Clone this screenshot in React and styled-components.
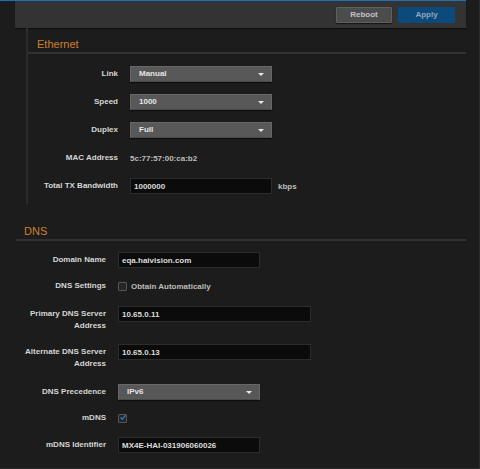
import React from "react";
import styled, { createGlobalStyle } from "styled-components";

const GlobalStyle = createGlobalStyle`
  html, body {
    margin: 0;
    padding: 0;
    background: #1c1c1c;
  }
  body {
    font-family: "Liberation Sans", Arial, sans-serif;
  }
`;

const Page = styled.div`
  display: flex;
  width: 480px;
  height: 469px;
  box-sizing: border-box;
  background: #1c1c1c;
  border-right: 1px solid #2a2a2a;
  border-bottom: 1px solid #2a2a2a;
  overflow: hidden;
`;

const Main = styled.div`
  width: 466px;
  border-top: 1px solid #1f6fb9;
  display: flex;
  flex-direction: column;
`;

const Toolbar = styled.div`
  margin-left: 15px;
  height: 27px;
  background: #333333;
  display: flex;
  justify-content: flex-end;
  align-items: center;
  gap: 6px;
  padding-right: 11px;
  box-shadow: 0 1px 1px rgba(0, 0, 0, 0.5);
`;

const Button = styled.button`
  width: ${(p) => (p.$primary ? "57px" : "56px")};
  height: 16px;
  padding: 0;
  box-sizing: border-box;
  font-family: "Liberation Sans", Arial, sans-serif;
  font-size: 8px;
  font-weight: bold;
  border-radius: 1px;
  color: ${(p) => (p.$primary ? "#8fa6bd" : "#c4c4c4")};
  background: ${(p) => (p.$primary ? "#0d4a7c" : "#4c4c4c")};
  border: 1px solid ${(p) => (p.$primary ? "#0d4a7c" : "#5f5f5f")};
  box-shadow: ${(p) => (p.$primary ? "none" : "0 1px 1px rgba(0,0,0,0.6)")};
`;

const Ethernet = styled.section`
  margin-left: 26px;
  border-left: 2px solid #2b2b2b;
  padding-bottom: 10px;
`;

const Dns = styled.section`
  margin-left: 15px;
  padding-left: 1px;
`;

const SectionTitle = styled.h2`
  margin: 0;
  font-family: "Liberation Sans", Arial, sans-serif;
  font-size: 11px;
  font-weight: normal;
  line-height: 14px;
  color: #cf7f2d;
  border-bottom: 2px solid #323232;
  padding: ${(p) => p.$pad};
`;

const Rows = styled.div`
  display: flex;
  flex-direction: column;
`;

const Row = styled.div`
  display: flex;
  align-items: ${(p) => (p.$tall ? "flex-start" : "center")};
  gap: 12px;
  min-height: ${(p) => (p.$tall ? "28px" : "16px")};
  margin-top: ${(p) => p.$mt}px;
`;

const Label = styled.div`
  width: 90px;
  flex: none;
  text-align: right;
  font-size: 8px;
  font-weight: bold;
  line-height: 11.5px;
  color: #d6d6d6;
  padding-top: ${(p) => (p.$tall ? "2px" : "0")};
`;

const Select = styled.div`
  position: relative;
  width: ${(p) => p.$w || 142}px;
  height: 16px;
  box-sizing: border-box;
  background: #585858;
  border: 1px solid #686868;
  border-bottom-color: #4a4a4a;
  padding-left: 8px;
  font-size: 8px;
  font-weight: bold;
  line-height: 14px;
  color: #e6e6e6;
  box-shadow: 0 1px 1px rgba(0, 0, 0, 0.5);

  &::after {
    content: "";
    position: absolute;
    right: 7px;
    top: 6px;
    border-left: 3px solid transparent;
    border-right: 3px solid transparent;
    border-top: 3px solid #e8e8e8;
  }
`;

const TextInput = styled.input`
  width: ${(p) => p.$w || 142}px;
  height: 16px;
  box-sizing: border-box;
  margin: 0;
  background: #0b0b0b;
  border: 1px solid #2c2c2c;
  border-radius: 0;
  padding: 0 3px;
  font-family: "Liberation Sans", Arial, sans-serif;
  font-size: 8px;
  font-weight: bold;
  color: #dcdcdc;
  outline: none;
`;

const Value = styled.span`
  font-size: 8px;
  color: ${(p) => p.$color || "#bdbdbd"};
  font-weight: bold;
`;

const Unit = styled(Value)`
  margin-left: -6px;
`;

const Check = styled.span`
  display: inline-flex;
  align-items: center;
  justify-content: center;
  width: 9px;
  height: 9px;
  box-sizing: border-box;
  background: #262626;
  border: 1px solid #565656;
  border-radius: 1px;
`;

const CheckLine = styled.label`
  display: flex;
  align-items: center;
  gap: 4px;
`;

const Tick = styled.svg`
  margin-top: -2px;
  margin-left: 1px;
`;

function Checkbox({ checked, children }) {
  return (
    <CheckLine>
      <Check>
        {checked && (
          <Tick width="10" height="9" viewBox="0 0 10 9">
            <path d="M1 4.5 L3.8 7.2 L9 1" fill="none" stroke="#2a8de4" strokeWidth="1.8" />
          </Tick>
        )}
      </Check>
      {children && <Value>{children}</Value>}
    </CheckLine>
  );
}

export default function App() {
  return (
    <>
      <GlobalStyle />
      <Page>
        <Main>
          <Toolbar>
            <Button>Reboot</Button>
            <Button $primary>Apply</Button>
          </Toolbar>

          <Ethernet>
            <SectionTitle $pad="9px 0 1px 9px">Ethernet</SectionTitle>
            <Rows>
              <Row $mt={12}>
                <Label>Link</Label>
                <Select>Manual</Select>
              </Row>
              <Row $mt={12}>
                <Label>Speed</Label>
                <Select>1000</Select>
              </Row>
              <Row $mt={12}>
                <Label>Duplex</Label>
                <Select>Full</Select>
              </Row>
              <Row $mt={12}>
                <Label>MAC Address</Label>
                <Value>5c:77:57:00:ca:b2</Value>
              </Row>
              <Row $mt={12}>
                <Label>Total TX Bandwidth</Label>
                <TextInput readOnly defaultValue="1000000" />
                <Unit>kbps</Unit>
              </Row>
            </Rows>
          </Ethernet>

          <Dns>
            <SectionTitle $pad="20px 0 1px 8px">DNS</SectionTitle>
            <Rows>
              <Row $mt={11}>
                <Label>Domain Name</Label>
                <TextInput readOnly defaultValue="eqa.haivision.com" />
              </Row>
              <Row $mt={10}>
                <Label>DNS Settings</Label>
                <Checkbox>Obtain Automatically</Checkbox>
              </Row>
              <Row $mt={12} $tall>
                <Label $tall>
                  Primary DNS Server
                  <br />
                  Address
                </Label>
                <TextInput $w={193} readOnly defaultValue="10.65.0.11" />
              </Row>
              <Row $mt={10} $tall>
                <Label $tall>
                  Alternate DNS Server
                  <br />
                  Address
                </Label>
                <TextInput $w={193} readOnly defaultValue="10.65.0.13" />
              </Row>
              <Row $mt={12}>
                <Label>DNS Precedence</Label>
                <Select>IPv6</Select>
              </Row>
              <Row $mt={10}>
                <Label>mDNS</Label>
                <Checkbox checked />
              </Row>
              <Row $mt={11}>
                <Label>mDNS Identifier</Label>
                <TextInput readOnly defaultValue="MX4E-HAI-031906060026" />
              </Row>
            </Rows>
          </Dns>
        </Main>
      </Page>
    </>
  );
}
